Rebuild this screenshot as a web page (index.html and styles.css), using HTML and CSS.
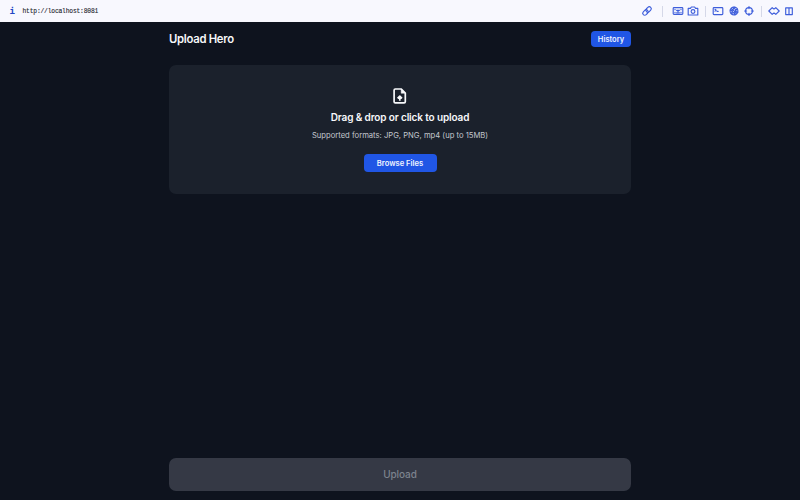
FILE: index.html
```html
<!DOCTYPE html>
<html lang="en">
<head>
<meta charset="utf-8">
<title>Upload Hero</title>
<link rel="stylesheet" href="styles.css">
</head>
<body>
<div class="toolbar">
  <span class="info">i</span>
  <span class="url">http://localhost:8081</span>
  <div class="tools">
    <svg class="icon" viewBox="0 0 12 12"><g transform="rotate(-45 6 6)"><rect x="0.8" y="4" width="6" height="4" rx="2"/><rect x="5.2" y="4" width="6" height="4" rx="2"/></g></svg>
    <i class="sep sep-first"></i>
    <svg class="icon" viewBox="0 0 12 12"><rect x="1.2" y="2.600" width="9.6" height="6.8" rx=".8"/><path d="M3 4.300v.4M9 4.300v.4M3 7.300v.4M9 7.300v.4M4.600 5.200 6 6.400l1.400-1.200zM4.600 7.800h2.800"/></svg>
    <svg class="icon icon-camera" viewBox="0 0 12 12"><path d="M1.200 3.400h2.200l1-1.400h3.200l1 1.400h2.200v6.600H1.200z"/><circle cx="6" cy="6.500" r="1.900"/></svg>
    <i class="sep"></i>
    <svg class="icon" viewBox="0 0 12 12"><rect x="1.200" y="2.600" width="9.600" height="7.000" rx=".8"/><path d="m3 4.300 1.200.9L3 6.100M5 6.300h1.200"/></svg>
    <svg class="icon icon-wheel" viewBox="0 0 12 12"><circle cx="6" cy="6" r="3.900"/><path d="M6 2.100 7.500 5l1.900-1L7 6l2.800 1.300-3 .2.200 2.300-1.300-2.300L3.200 8.600 4.500 6.300 2.200 5l2.900-.3zM3.400 3.400l5 5"/></svg>
    <svg class="icon icon-target" viewBox="0 0 12 12"><circle cx="6" cy="6" r="3.400"/><path d="M6 1.600v2M6 8.400v2M1.600 6h2M8.400 6h2"/></svg>
    <i class="sep sep-last"></i>
    <svg class="icon icon-arrows" viewBox="0 0 12 12"><path d="M4.200 2.600.8 6l3.400 3.400L6 7.900l1.800 1.500L11.200 6 7.800 2.600 6 4.100z"/></svg>
    <svg class="icon icon-split" viewBox="0 0 12 12"><path d="M2.700 2.900h6.600v6.700H2.700zM6 2.900v6.700"/></svg>
  </div>
</div>
<main class="page">
  <header class="header">
    <h1 class="title">Upload Hero</h1>
    <button class="btn btn-history">History</button>
  </header>
  <section class="dropzone">
    <svg class="file-icon" viewBox="0 0 14 16"><path d="M2.300 1h6l4 4v8.700a1.200 1.200 0 0 1-1.200 1.200H2.300A1.200 1.200 0 0 1 1.100 13.700V2.200A1.200 1.200 0 0 1 2.300 1z"/><path class="fold" d="M8.200 1v4.200h4.200z"/><path d="M6.800 12.700V8.500M4.600 10.300l2.200-2.200L9 10.300"/></svg>
    <h2 class="drop-title">Drag &amp; drop or click to upload</h2>
    <p class="formats">Supported formats: JPG, PNG, mp4 (up to 15MB)</p>
    <button class="btn btn-browse">Browse Files</button>
  </section>
  <button class="upload" disabled>Upload</button>
</main>
</body>
</html>
```
FILE: styles.css
```css
* { box-sizing: border-box; }
body {
  margin: 0;
  height: 500px;
  display: flex;
  flex-direction: column;
  overflow: hidden;
  background: #0e131e;
  font-family: Inter, "Liberation Sans", sans-serif;
}
.toolbar {
  height: 22px;
  flex: none;
  display: flex;
  align-items: center;
  padding: 0 5px 0 9.500px;
  background: #f8f8fe;
}
.info {
  width: 13px;
  font: bold 9px/22px "DejaVu Sans Mono", monospace;
  color: #2446c4;
}
.url {
  font: 6.300px/23px "Liberation Mono", monospace;
  letter-spacing: -.18px;
  -webkit-text-stroke: .1px #20222a;
  color: #20222a;
}
.tools { margin-left: auto; display: flex; align-items: center; }
.icon {
  width: 12px;
  height: 12px;
  fill: none;
  stroke: #3e5edb;
  stroke-width: 1.150;
  stroke-linecap: round;
  stroke-linejoin: round;
}
.sep { width: 1px; height: 11px; margin: 0 6px; background: #d5d8e8; }
.sep-first { margin: 0 9px; }
.sep-last { margin: 0 6px; }
.icon-camera, .icon-split { margin-left: 3px; }
.icon-wheel, .icon-target { margin-left: 3.500px; }
.page {
  width: 462px;
  flex: 1;
  margin: 0 auto;
  padding: 9px 0;
  display: flex;
  flex-direction: column;
}
.header { height: 16px; display: flex; align-items: center; justify-content: space-between; }
.title {
  margin: 0;
  font-size: 11.300px;
  line-height: 16px;
  font-weight: 600;
  letter-spacing: -.28px;
  color: #f7f8fa;
}
.btn {
  border: 0;
  padding: 0;
  font-family: inherit;
  font-weight: 600;
  color: #f0f4ff;
  background: #2056e5;
}
.btn-history { width: 40px; height: 16px; border-radius: 4px; font-size: 7.500px; }
.dropzone {
  height: 129px;
  margin-top: 18px;
  padding-top: 23px;
  display: flex;
  flex-direction: column;
  align-items: center;
  border-radius: 7px;
  background: #1b212c;
}
.file-icon {
  width: 14px;
  height: 16px;
  fill: none;
  stroke: #f8f9fb;
  stroke-width: 1.700;
  stroke-linejoin: round;
}
.file-icon .fold { fill: #f8f9fb; stroke-width: .5; }
.drop-title {
  margin: 6px 0 0;
  font-size: 10px;
  line-height: 14px;
  font-weight: 600;
  letter-spacing: -.13px;
  color: #f7f8fa;
}
.formats { margin: 6px 0 0; font-size: 7.650px; line-height: 11px; color: #c3c7ce; }
.btn-browse { width: 73px; height: 18px; margin-top: 12.500px; padding-top: 1px; border-radius: 4px; font-size: 7.600px; }
.upload {
  height: 33px;
  margin-top: auto;
  padding: 0 0 1px;
  border: 0;
  border-radius: 7px;
  font: 500 10px Inter, "Liberation Sans", sans-serif;
  letter-spacing: -.1px;
  color: #7d838e;
  background: #353945;
}
```
